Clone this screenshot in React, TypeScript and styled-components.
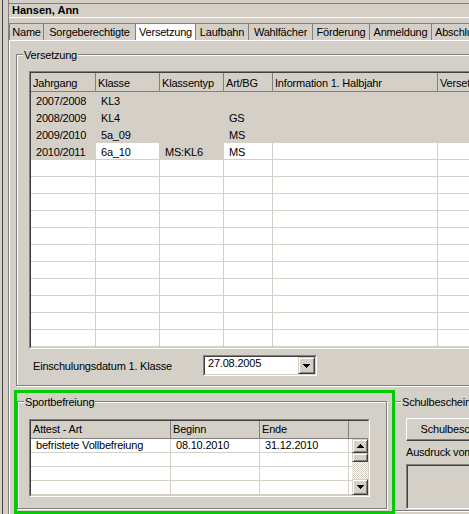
import React from "react";
import styled, { createGlobalStyle, css } from "styled-components";

const FACE = "#d4d0c8";
const SHADOW = "#808080";
const DARK = "#404040";
const LIGHT = "#ffffff";
const GREEN = "#00cc00";

const GlobalStyle = createGlobalStyle`
  *, *::before, *::after { box-sizing: border-box; }
  html, body { margin: 0; padding: 0; background: ${FACE}; }
  body {
    font-family: "Liberation Sans", Arial, sans-serif;
    font-size: 11px;
    letter-spacing: -0.2px;
    color: #000;
  }
`;

const Page = styled.div`
  width: 469px;
  height: 514px;
  overflow: hidden;
  background: ${FACE};
  display: flex;
  padding-left: 2px;
`;

const Frame = styled.div`
  display: flex;
  height: 100%;
  border-left: 1px solid ${DARK};
  padding-left: 5px;
`;

const Main = styled.div`
  width: 600px;
  flex: none;
  display: flex;
  flex-direction: column;
  padding-top: 3px;
  border-left: 1px solid ${SHADOW};
`;

const TitleBar = styled.div`
  height: 15px;
  border-top: 1px solid ${SHADOW};
  border-bottom: 1px solid ${LIGHT};
  padding-left: 3px;
  font-weight: bold;
  line-height: 13px;
  letter-spacing: 0;
`;

const TabStrip = styled.div`
  display: flex;
  margin-top: 5px;
  height: 17px;
`;

const Tab = styled.div<{ $w: number; $active?: boolean; $first?: boolean; $left?: boolean }>`
  width: ${(p) => p.$w}px;
  flex: none;
  border-top: 1px solid ${SHADOW};
  border-right: 1px solid ${SHADOW};
  border-left: ${(p) => (p.$first ? `1px solid ${SHADOW}` : "none")};
  background: ${(p) => (p.$active ? LIGHT : FACE)};
  text-align: ${(p) => (p.$left ? "left" : "center")};
  padding: 1px 0 0 ${(p) => (p.$left ? 3 : 0)}px;
  line-height: 15px;
  white-space: nowrap;
  overflow: hidden;
`;

const TabPanel = styled.div`
  flex: 1;
  display: flex;
  flex-direction: column;
  border-top: 1px solid ${LIGHT};
  border-left: 1px solid ${LIGHT};
  padding-top: 13px;
`;

const GroupBox = styled.div<{ $open?: boolean }>`
  display: flex;
  flex-direction: column;
  align-items: flex-start;
  flex: none;
  border: 1px solid ${SHADOW};
  ${(p) =>
    p.$open
      ? css`
          border-left: none;
          box-shadow: inset 0 1px 0 ${LIGHT}, 0 1px 0 ${LIGHT};
        `
      : css`
          box-shadow: inset 1px 1px 0 ${LIGHT}, 1px 1px 0 ${LIGHT};
        `}
`;

const VersetzungGroup = styled(GroupBox)`
  margin-left: 6px;
  width: 600px;
  padding-bottom: 9px;
`;

const Legend = styled.div`
  margin: -6px 0 0 6px;
  padding: 0 1px;
  background: ${FACE};
  line-height: 13px;
  white-space: nowrap;
`;

const SunkenOuter = styled.div<{ $mt: number; $ml: number }>`
  flex: none;
  margin: ${(p) => p.$mt}px 0 0 ${(p) => p.$ml}px;
  border: 1px solid;
  border-color: ${SHADOW} ${LIGHT} ${LIGHT} ${SHADOW};
`;

const SunkenInner = styled.div`
  border: 1px solid;
  border-color: ${DARK} ${FACE} ${FACE} ${DARK};
`;

const Row = styled.div`
  display: flex;
`;

const HeadCell = styled.div<{ $w: number; $h: number; $last?: boolean }>`
  width: ${(p) => p.$w}px;
  height: ${(p) => p.$h}px;
  flex: none;
  background: ${FACE};
  border-right: ${(p) => (p.$last ? "none" : `1px solid ${SHADOW}`)};
  border-bottom: 1px solid ${SHADOW};
  padding: ${(p) => (p.$h > 18 ? 3 : 2)}px 0 0 2px;
  line-height: ${(p) => (p.$h > 18 ? 15 : 13)}px;
  white-space: nowrap;
  overflow: hidden;
`;

const DataCell = styled.div<{ $w: number; $h: number; $grey?: boolean }>`
  width: ${(p) => p.$w}px;
  height: ${(p) => p.$h}px;
  flex: none;
  background: ${(p) => (p.$grey ? FACE : LIGHT)};
  border-right: 1px solid ${FACE};
  border-bottom: 1px solid ${FACE};
  padding: ${(p) => (p.$h > 15 ? 2 : 0)}px 0 0 5px;
  line-height: ${(p) => (p.$h > 15 ? 14 : 13)}px;
  white-space: nowrap;
  overflow: hidden;
`;

const Filler = styled.div<{ $w: number; $h: number }>`
  width: ${(p) => p.$w}px;
  height: ${(p) => p.$h}px;
  flex: none;
  background: ${LIGHT};
  border-bottom: 1px solid ${FACE};
`;

const EinschulRow = styled.div`
  display: flex;
  align-items: center;
  margin-top: 6px;
  padding-left: 16px;
`;

const FieldLabel = styled.div`
  width: 170px;
  padding-top: 2px;
  line-height: 13px;
  white-space: nowrap;
`;

const ComboOuter = styled.div`
  width: 114px;
  height: 21px;
  border: 1px solid;
  border-color: ${SHADOW} ${LIGHT} ${LIGHT} ${SHADOW};
`;

const ComboInner = styled.div`
  height: 100%;
  display: flex;
  background: ${LIGHT};
  border: 1px solid;
  border-color: ${DARK} ${FACE} ${FACE} ${DARK};
`;

const ComboText = styled.div`
  flex: 1;
  padding-left: 3px;
  line-height: 13px;
`;

const raised = css`
  background: ${FACE};
  border: 1px solid;
  border-color: ${FACE} ${DARK} ${DARK} ${FACE};
  box-shadow: inset 1px 1px 0 ${LIGHT}, inset -1px -1px 0 ${SHADOW};
  display: flex;
  align-items: center;
  justify-content: center;
`;

const DropButton = styled.div`
  ${raised};
  width: 17px;
  height: 17px;
  flex: none;
`;

const BottomRow = styled.div`
  display: flex;
  align-items: flex-start;
  margin: 4px 0 0 4px;
`;

const GreenFrame = styled.div`
  width: 381px;
  height: 124px;
  flex: none;
  border: 3px solid ${GREEN};
  padding-top: 8px;
`;

const SportGroup = styled(GroupBox)`
  width: 370px;
  height: 108px;
`;

const ScrollBar = styled.div`
  width: 16px;
  display: flex;
  flex-direction: column;
  flex: none;
`;

const ScrollButton = styled.div<{ $h: number }>`
  ${raised};
  height: ${(p) => p.$h}px;
  flex: none;
`;

const Thumb = styled.div`
  ${raised};
  height: 9px;
  flex: none;
`;

const Track = styled.div`
  flex: 1;
  background-color: ${FACE};
  background-image: repeating-conic-gradient(${LIGHT} 0 25%, ${FACE} 0 50%);
  background-size: 2px 2px;
`;

const SchulGroup = styled(GroupBox)`
  margin-top: 11px;
  width: 120px;
  height: 110px;
`;

const PushButton = styled.div`
  margin: 9px 0 0 11px;
  width: 124px;
  height: 23px;
  flex: none;
  background: ${FACE};
  border: 1px solid;
  border-color: ${LIGHT} ${DARK} ${DARK} ${LIGHT};
  box-shadow: inset -1px -1px 0 ${SHADOW};
  text-align: center;
  line-height: 20px;
  white-space: nowrap;
`;

const SmallLabel = styled.div`
  margin: 5px 0 0 11px;
  line-height: 13px;
  white-space: nowrap;
`;

const DisabledBox = styled.div`
  margin: 5px 0 0 11px;
  width: 90px;
  height: 45px;
  flex: none;
  border: 1px solid;
  border-color: ${SHADOW} ${LIGHT} ${LIGHT} ${SHADOW};
  box-shadow: inset 1px 1px 0 ${DARK};
  background: ${FACE};
`;

const Arrow = ({ up }: { up?: boolean }) => (
  <svg width="7" height="4" viewBox="0 0 7 4" shapeRendering="crispEdges">
    <polygon points={up ? "3.5,0 7,4 0,4" : "0,0 7,0 3.5,4"} fill="#000" />
  </svg>
);

const tabs = [
  { label: "Name", w: 35 },
  { label: "Sorgeberechtigte", w: 92 },
  { label: "Versetzung", w: 60, active: true },
  { label: "Laufbahn", w: 53 },
  { label: "Wahlfächer", w: 64 },
  { label: "Förderung", w: 57 },
  { label: "Anmeldung", w: 62 },
  { label: "Abschluss", w: 70, left: true },
];

const vCols = [
  { label: "Jahrgang", w: 65 },
  { label: "Klasse", w: 64 },
  { label: "Klassentyp", w: 64 },
  { label: "Art/BG", w: 49 },
  { label: "Information 1. Halbjahr", w: 165 },
  { label: "Versetzung", w: 120 },
];

type VCell = { t: string; grey: boolean };
const g = (t = ""): VCell => ({ t, grey: true });
const w = (t = ""): VCell => ({ t, grey: false });

const vRows: VCell[][] = [
  [g("2007/2008"), g("KL3"), g(), g(), g(), g()],
  [g("2008/2009"), g("KL4"), g(), g("GS"), g(), g()],
  [g("2009/2010"), g("5a_09"), g(), g("MS"), g(), g()],
  [g("2010/2011"), w("6a_10"), g("MS:KL6"), w("MS"), w(), w()],
  ...Array.from({ length: 11 }, () => [w(), w(), w(), w(), w(), w()]),
];

const sCols = [
  { label: "Attest - Art", w: 140 },
  { label: "Beginn", w: 89 },
  { label: "Ende", w: 89 },
];

const sRows = [
  ["befristete Vollbefreiung", "08.10.2010", "31.12.2010"],
  ["", "", ""],
  ["", "", ""],
  ["", "", ""],
];

export default function App() {
  return (
    <>
      <GlobalStyle />
      <Page>
        <Frame>
          <Main>
            <TitleBar>Hansen, Ann</TitleBar>
            <TabStrip>
              {tabs.map((t, i) => (
                <Tab key={t.label} $w={t.w} $active={t.active} $first={i === 0} $left={t.left}>
                  {t.label}
                </Tab>
              ))}
            </TabStrip>
            <TabPanel>
              <VersetzungGroup>
                <Legend>Versetzung</Legend>
                <SunkenOuter $mt={9} $ml={12}>
                  <SunkenInner>
                    <Row>
                      {vCols.map((c) => (
                        <HeadCell key={c.label} $w={c.w} $h={19}>
                          {c.label}
                        </HeadCell>
                      ))}
                    </Row>
                    {vRows.map((r, ri) => (
                      <Row key={ri}>
                        {r.map((c, ci) => (
                          <DataCell key={ci} $w={vCols[ci].w} $h={17} $grey={c.grey}>
                            {c.t}
                          </DataCell>
                        ))}
                      </Row>
                    ))}
                  </SunkenInner>
                </SunkenOuter>
                <EinschulRow>
                  <FieldLabel>Einschulungsdatum 1. Klasse</FieldLabel>
                  <ComboOuter>
                    <ComboInner>
                      <ComboText>27.08.2005</ComboText>
                      <DropButton>
                        <Arrow />
                      </DropButton>
                    </ComboInner>
                  </ComboOuter>
                </EinschulRow>
              </VersetzungGroup>

              <BottomRow>
                <GreenFrame>
                  <SportGroup>
                    <Legend>Sportbefreiung</Legend>
                    <SunkenOuter $mt={10} $ml={11}>
                      <SunkenInner>
                        <Row>
                          {sCols.map((c) => (
                            <HeadCell key={c.label} $w={c.w} $h={18}>
                              {c.label}
                            </HeadCell>
                          ))}
                          <HeadCell $w={19} $h={18} $last />
                        </Row>
                        <Row>
                          <div>
                            {sRows.map((r, ri) => (
                              <Row key={ri}>
                                {r.map((t, ci) => (
                                  <DataCell key={ci} $w={sCols[ci].w} $h={14}>
                                    {t}
                                  </DataCell>
                                ))}
                                <Filler $w={3} $h={14} />
                              </Row>
                            ))}
                          </div>
                          <ScrollBar>
                            <ScrollButton $h={14}>
                              <Arrow up />
                            </ScrollButton>
                            <Thumb />
                            <Track />
                            <ScrollButton $h={16}>
                              <Arrow />
                            </ScrollButton>
                          </ScrollBar>
                        </Row>
                      </SunkenInner>
                    </SunkenOuter>
                  </SportGroup>
                </GreenFrame>

                <SchulGroup $open>
                  <Legend>Schulbescheinigung</Legend>
                  <PushButton>Schulbescheinigung</PushButton>
                  <SmallLabel>Ausdruck vom:</SmallLabel>
                  <DisabledBox />
                </SchulGroup>
              </BottomRow>
            </TabPanel>
          </Main>
        </Frame>
      </Page>
    </>
  );
}
